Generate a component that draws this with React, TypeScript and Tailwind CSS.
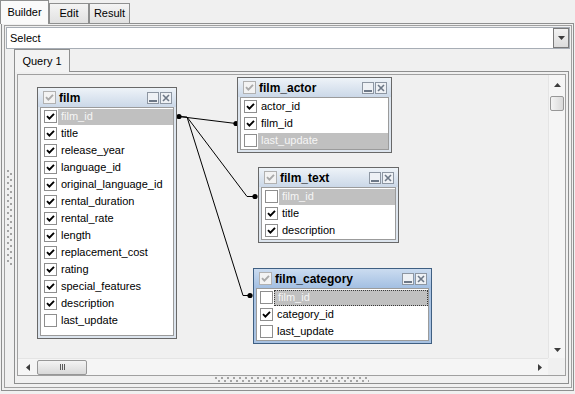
import React from 'react';

type Col = { name: string; checked: boolean; sel?: boolean; focus?: boolean };

const Check = ({ checked, disabled }: { checked: boolean; disabled?: boolean }) => (
  <div
    className={`w-[13px] h-[13px] shrink-0 border flex items-center justify-center ${
      disabled ? 'border-[#b1b1b1] bg-[#f3f3f3]' : 'border-[#8e8e8e] bg-white'
    }`}
  >
    {checked && (
      <svg width="11" height="11" viewBox="0 0 11 11">
        <path d="M2 5.2 L4.4 7.6 L9 2.8" fill="none" stroke={disabled ? '#a9a9a9' : '#000'} strokeWidth="1.9" />
      </svg>
    )}
  </div>
);

const MinBtn = () => (
  <svg width="12" height="12" viewBox="0 0 12 12">
    <rect x="0.5" y="0.5" width="11" height="11" fill="#eef1f5" stroke="#8d96a2" />
    <rect x="2" y="8" width="8" height="2" fill="#6d7887" />
  </svg>
);

const CloseBtn = () => (
  <svg width="12" height="12" viewBox="0 0 12 12">
    <rect x="0.5" y="0.5" width="11" height="11" fill="#eef1f5" stroke="#8d96a2" />
    <path d="M3 3 L9 9 M9 3 L3 9" stroke="#6d7887" strokeWidth="1.6" />
  </svg>
);

const Row = ({ c }: { c: Col }) => (
  <div className="h-[17px] flex items-center pl-[3px]">
    <Check checked={c.checked} />
    <div
      className={`ml-[1px] flex-1 h-[16px] flex items-center pl-[3px] whitespace-nowrap ${
        c.sel ? 'bg-[#c0c0c0] text-[#f5f5f5]' : ''
      } ${c.focus ? 'border border-dotted border-[#3a3a3a]' : ''}`}
    >
      {c.name}
    </div>
  </div>
);

const Table = ({
  title,
  cols,
  pos,
  listH,
  active,
}: {
  title: string;
  cols: Col[];
  pos: string;
  listH?: string;
  active?: boolean;
}) => (
  <div
    className={`absolute border ${
      active ? 'border-[#3f5f82] bg-[#a8c2e2]' : 'border-[#686868] bg-[#dde5ee]'
    } ${pos}`}
  >
    <div
      className={`h-[19px] flex items-center pl-[5px] pr-[4px] bg-gradient-to-b ${
        active ? 'from-[#cbdcf0] to-[#a3bfe2]' : 'from-[#eef3f8] to-[#cbd8e8]'
      }`}
    >
      <Check checked disabled />
      <span className="ml-[3px] flex-1 font-bold text-[12px] text-black">{title}</span>
      <div className="flex gap-[1px]">
        <MinBtn />
        <CloseBtn />
      </div>
    </div>
    <div className="px-[2px] pb-[2px]">
      <div className={`border border-[#9b9b9b] bg-white ${listH ?? ''}`}>
        {cols.map((c) => (
          <Row key={c.name} c={c} />
        ))}
      </div>
    </div>
  </div>
);

const filmCols: Col[] = [
  { name: 'film_id', checked: true, sel: true },
  { name: 'title', checked: true },
  { name: 'release_year', checked: true },
  { name: 'language_id', checked: true },
  { name: 'original_language_id', checked: true },
  { name: 'rental_duration', checked: true },
  { name: 'rental_rate', checked: true },
  { name: 'length', checked: true },
  { name: 'replacement_cost', checked: true },
  { name: 'rating', checked: true },
  { name: 'special_features', checked: true },
  { name: 'description', checked: true },
  { name: 'last_update', checked: false },
];

const actorCols: Col[] = [
  { name: 'actor_id', checked: true },
  { name: 'film_id', checked: true },
  { name: 'last_update', checked: false, sel: true },
];

const textCols: Col[] = [
  { name: 'film_id', checked: false, sel: true },
  { name: 'title', checked: true },
  { name: 'description', checked: true },
];

const categoryCols: Col[] = [
  { name: 'film_id', checked: false, sel: true, focus: true },
  { name: 'category_id', checked: true },
  { name: 'last_update', checked: false },
];

const Dots = ({ w, h, id }: { w: number; h: number; id: string }) => (
  <svg width={w} height={h}>
    <defs>
      <pattern id={id} width="6" height="6" patternUnits="userSpaceOnUse">
        <rect x="0" y="0" width="2" height="2" fill="#a3a3a3" />
        <rect x="3" y="3" width="2" height="2" fill="#a3a3a3" />
      </pattern>
    </defs>
    <rect width={w} height={h} fill={`url(#${id})`} />
  </svg>
);

const Tri = ({ dir }: { dir: 'up' | 'down' | 'left' | 'right' }) => {
  const d = {
    up: 'M0 4 L3.5 0 L7 4 Z',
    down: 'M0 0 L7 0 L3.5 4 Z',
    left: 'M4 0 L4 7 L0 3.5 Z',
    right: 'M0 0 L4 3.5 L0 7 Z',
  }[dir];
  const vert = dir === 'up' || dir === 'down';
  return (
    <svg width={vert ? 7 : 4} height={vert ? 4 : 7} viewBox={vert ? '0 0 7 4' : '0 0 4 7'}>
      <path d={d} fill="#3c3c3c" />
    </svg>
  );
};

const App: React.FC = () => {
  return (
    <div className="w-[575px] h-[394px] bg-[#f0f0f0] overflow-hidden font-['Liberation_Sans',Arial,sans-serif] text-[11px] text-black select-none">
      {/* Top tabs */}
      <div className="flex items-end h-[23px]">
        <div className="relative z-10 h-[24px] -mb-[1px] w-[49px] bg-[#fafafa] border border-b-0 border-[#8e8f8f] flex items-center justify-center">
          Builder
        </div>
        <div className="h-[20px] w-[40px] bg-gradient-to-b from-[#f4f4f4] to-[#e1e1e1] border border-b-0 border-[#8e8f8f] flex items-center justify-center">
          Edit
        </div>
        <div className="h-[20px] w-[41px] bg-gradient-to-b from-[#f4f4f4] to-[#e1e1e1] border border-b-0 border-[#8e8f8f] flex items-center justify-center">
          Result
        </div>
      </div>

      {/* Page */}
      <div className="ml-[1px] w-[573px] h-[368px] border border-[#8e8f8f] pt-[1px] pl-[2px] pr-[1px] pb-[2px]">
        <div className="h-full border border-[#a0a0a0] flex flex-col">
          {/* Select combo */}
          <div className="mt-[1px] mx-[1px] h-[22px] bg-white border border-[#a7adb5] flex items-center">
            <span className="flex-1 pl-[3px]">Select</span>
            <div className="w-[16px] h-[20px] border border-[#7a7a7a] bg-gradient-to-b from-[#f2f2f2] to-[#dcdcdc] flex items-center justify-center">
              <Tri dir="down" />
            </div>
          </div>

          <div className="flex-1 flex">
            {/* left splitter */}
            <div className="w-[9px] flex items-center pl-[2px]">
              <Dots w={6} h={96} id="vsplit" />
            </div>

            {/* Query tabs */}
            <div className="flex-1 mr-[2px] mb-[3px] flex flex-col">
              <div className="h-[22px] flex items-end">
                <div className="relative z-10 h-[23px] -mb-[1px] w-[56px] bg-[#f3f3f3] border border-b-0 border-[#8e8f8f] flex items-center justify-center">
                  Query 1
                </div>
              </div>
              <div className="flex-1 border border-[#8e8f8f] p-[2px] pb-0 flex flex-col">
                {/* canvas */}
                <div className="h-[302px] border border-[#a0a0a0] flex flex-col">
                  <div className="h-[283px] flex">
                    <div className="relative flex-1 bg-[#f0f0f0] overflow-hidden">
                      <svg className="absolute inset-0" width="530" height="283">
                        <g stroke="#000" strokeWidth="1" fill="none">
                          <path d="M161 41.5 L218 48.5" />
                          <path d="M161 41.5 L169 42 L229 121.5 L237 121.5" />
                          <path d="M169 42 L225 220.5 L232 220.5" />
                        </g>
                        <g fill="#000">
                          <circle cx="161" cy="41.5" r="2.6" />
                          <circle cx="218" cy="48.5" r="2.6" />
                          <circle cx="237" cy="121.5" r="2.6" />
                          <circle cx="232" cy="220.5" r="2.6" />
                        </g>
                      </svg>
                      <Table title="film" cols={filmCols} pos="left-[19px] top-[12px] w-[140px]" listH="h-[229px]" />
                      <Table title="film_actor" cols={actorCols} pos="left-[219px] top-[2px] w-[155px]" />
                      <Table title="film_text" cols={textCols} pos="left-[240px] top-[92px] w-[141px]" />
                      <Table title="film_category" cols={categoryCols} pos="left-[235px] top-[193px] w-[179px]" active />
                    </div>
                    {/* vertical scrollbar */}
                    <div className="w-[17px] bg-[#f5f5f5] border-l border-[#e4e4e4] flex flex-col">
                      <div className="h-[20px] flex items-center justify-center">
                        <Tri dir="up" />
                      </div>
                      <div className="mt-[1px] mx-[1px] h-[15px] rounded-[2px] border border-[#979797] bg-gradient-to-r from-[#f4f4f4] to-[#d9d9d9]" />
                      <div className="flex-1" />
                      <div className="h-[17px] flex items-center justify-center">
                        <Tri dir="down" />
                      </div>
                    </div>
                  </div>
                  {/* horizontal scrollbar */}
                  <div className="h-[17px] flex">
                    <div className="flex-1 bg-[#f5f5f5] border-t border-[#e4e4e4] flex items-center">
                      <div className="w-[19px] flex items-center justify-center">
                        <Tri dir="left" />
                      </div>
                      <div className="w-[50px] h-[15px] rounded-[2px] border border-[#979797] bg-gradient-to-b from-[#f4f4f4] to-[#d9d9d9] flex items-center justify-center gap-[1px]">
                        <div className="w-[1px] h-[6px] bg-[#5a5a5a]" />
                        <div className="w-[1px] h-[6px] bg-[#5a5a5a]" />
                        <div className="w-[1px] h-[6px] bg-[#5a5a5a]" />
                      </div>
                      <div className="flex-1" />
                      <div className="w-[17px] flex items-center justify-center">
                        <Tri dir="right" />
                      </div>
                    </div>
                    <div className="w-[17px] bg-[#f0f0f0]" />
                  </div>
                </div>
                {/* bottom splitter */}
                <div className="flex-1 flex items-center justify-center">
                  <Dots w={154} h={5} id="hsplit" />
                </div>
              </div>
            </div>
          </div>
        </div>
      </div>
    </div>
  );
};

export default App;
